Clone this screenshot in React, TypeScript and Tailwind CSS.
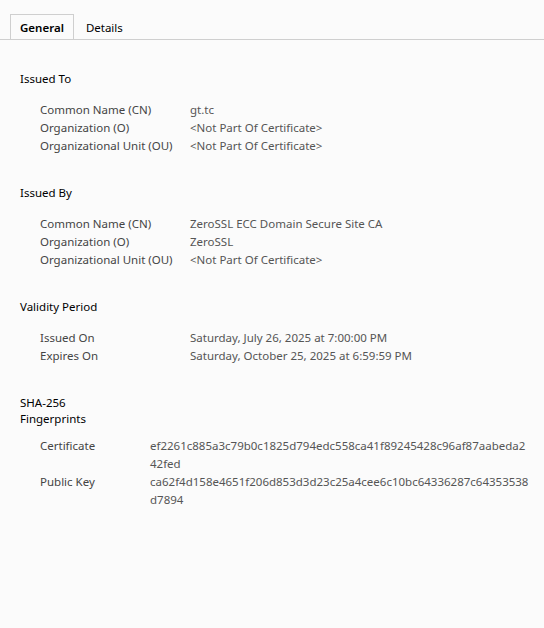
const font = { fontFamily: '"Noto Sans", "Open Sans", sans-serif' };

type Row = [string, React.ReactNode];

function Section({
  title,
  rows,
  valueCol = "w-[150px]",
  titleClass = "",
  gap = "mt-[13px]",
}: {
  title: React.ReactNode;
  rows: Row[];
  valueCol?: string;
  titleClass?: string;
  gap?: string;
}) {
  return (
    <div className="mb-[29px]">
      <div className={`text-black ${titleClass}`}>{title}</div>
      <div className={`${gap} pl-5`}>
        {rows.map(([k, v]) => (
          <div key={k} className="flex leading-[18px]">
            <div className={`${valueCol} shrink-0 text-[#444]`}>{k}</div>
            <div className="whitespace-nowrap text-[#555]">{v}</div>
          </div>
        ))}
      </div>
    </div>
  );
}

export default function App() {
  return (
    <div
      className="w-[544px] h-[628px] bg-[#fbfbfb] text-[11.5px] overflow-hidden"
      style={font}
    >
      <div className="pt-[14px] border-b border-[#cfcfcf] flex">
        <div className="ml-[10px] h-[25px] -mb-px px-[9px] pt-px border border-b-0 border-[#cfcfcf] bg-[#fbfbfb] font-semibold text-black flex items-center">
          General
        </div>
        <div className="px-3 h-[25px] pt-[2px] flex items-center text-black">Details</div>
      </div>

      <div className="pl-5 pt-[30px] leading-[18px]">
        <Section
          title="Issued To"
          rows={[
            ["Common Name (CN)", "gt.tc"],
            ["Organization (O)", "<Not Part Of Certificate>"],
            ["Organizational Unit (OU)", "<Not Part Of Certificate>"],
          ]}
        />
        <Section
          title="Issued By"
          rows={[
            ["Common Name (CN)", "ZeroSSL ECC Domain Secure Site CA"],
            ["Organization (O)", "ZeroSSL"],
            ["Organizational Unit (OU)", "<Not Part Of Certificate>"],
          ]}
        />
        <Section
          title="Validity Period"
          rows={[
            ["Issued On", "Saturday, July 26, 2025 at 7:00:00 PM"],
            ["Expires On", "Saturday, October 25, 2025 at 6:59:59 PM"],
          ]}
        />
        <Section
          title={
            <>
              SHA-256
              <br />
              Fingerprints
            </>
          }
          titleClass="leading-[16px] pt-[1px]"
          gap="mt-[10px]"
          valueCol="w-[110px]"
          rows={[
            [
              "Certificate",
              <>
                ef2261c885a3c79b0c1825d794edc558ca41f89245428c96af87aabeda2
                <br />
                42fed
              </>,
            ],
            [
              "Public Key",
              <>
                ca62f4d158e4651f206d853d3d23c25a4cee6c10bc64336287c64353538
                <br />
                d7894
              </>,
            ],
          ]}
        />
      </div>
    </div>
  );
}
